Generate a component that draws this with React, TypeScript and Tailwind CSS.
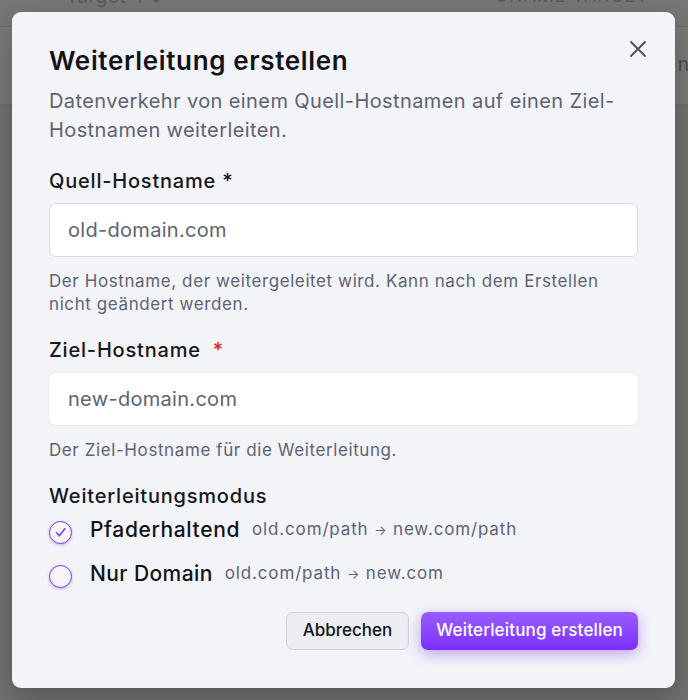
import React from 'react';

function CloseIcon() {
  return (
    <svg width="18" height="18" viewBox="0 0 18 18" fill="none" stroke="#4b5060" strokeWidth="1.8" strokeLinecap="round">
      <path d="M2 2l14 14M16 2L2 16" />
    </svg>
  );
}

function Radio({ checked }: { checked?: boolean }) {
  return (
    <span className="flex h-[23px] w-[23px] shrink-0 items-center justify-center rounded-full border-[1.5px] border-[#7c3aed] bg-[#f6f5fb] shadow-[0_1px_3px_rgba(124,58,237,0.35)]">
      {checked && (
        <svg width="13" height="13" viewBox="0 0 13 13" fill="none" stroke="#7c3aed" strokeWidth="1.6" strokeLinecap="round" strokeLinejoin="round">
          <path d="M2.5 6.8l2.8 3L10.8 2.8" />
        </svg>
      )}
    </span>
  );
}

export default function App() {
  return (
    <div className="relative h-[700px] w-[688px] overflow-hidden bg-[#717171] font-['Inter',sans-serif]">
      {/* page behind the overlay */}
      <div className="flex h-[27px] items-start border-b border-[#6c6c6c] bg-[#777777] text-[19px] leading-none text-[#5a5a5a]">
        <span className="ml-[66px] -mt-[13px] tracking-wide">Target ↑↓</span>
        <span className="ml-auto mr-[39px] -mt-[13px] text-[18px] tracking-[0.06em]">CNAME TARGET</span>
      </div>
      <div className="flex h-[78px] items-center justify-end border-b border-[#6c6c6c] bg-[#7a7a7a] text-[19px] text-[#4a4a4a]">
        <span className="-mr-[12px]">ne</span>
      </div>

      {/* dialog */}
      <div className="absolute left-[12px] top-[12px] flex h-[676px] w-[663px] flex-col rounded-[9px] bg-[#f3f4f8] px-[37px] pt-[33px] shadow-[0_10px_30px_rgba(0,0,0,0.25)]">
        <button type="button" className="absolute right-[27px] top-[27px] p-[1px]">
          <CloseIcon />
        </button>

        <h2 className="text-[26px] font-semibold leading-[32px] tracking-[0.025em] text-[#111318]">Weiterleitung erstellen</h2>
        <p className="mt-[10px] text-[20px] leading-[29px] tracking-[0.02em] text-[#5d6373]">
          Datenverkehr von einem Quell-Hostnamen auf einen Ziel-Hostnamen weiterleiten.
        </p>

        <label className="mt-[22px] text-[20px] font-medium leading-[28px] tracking-[0.04em] text-[#15171c]">Quell-Hostname *</label>
        <div className="mt-[8px] flex h-[54px] items-center rounded-[7px] border border-[#d6d8de] bg-white px-[18px] text-[20px] tracking-[0.015em] text-[#5d6373]">
          old-domain.com
        </div>
        <p className="mt-[13px] text-[17px] leading-[23px] tracking-[0.035em] text-[#5d6373]">
          Der Hostname, der weitergeleitet wird. Kann nach dem Erstellen nicht geändert werden.
        </p>

        <label className="mt-[20px] flex items-center text-[20px] font-medium leading-[28px] tracking-[0.04em] text-[#15171c]">
          Ziel-Hostname
          <span className="ml-[12px] text-[#e02424]">*</span>
        </label>
        <div className="mt-[9px] flex h-[52px] items-center rounded-[7px] bg-white px-[19px] text-[20px] tracking-[0.015em] text-[#5d6373] shadow-[0_0_2px_rgba(0,0,0,0.12)]">
          new-domain.com
        </div>
        <p className="mt-[14px] text-[17px] leading-[23px] tracking-[0.035em] text-[#5d6373]">Der Ziel-Hostname für die Weiterleitung.</p>

        <p className="mt-[20px] text-[20px] font-medium leading-[28px] tracking-[0.04em] text-[#15171c]">Weiterleitungsmodus</p>

        <div className="mt-[6px] flex flex-col gap-[16px]">
          <div className="flex h-[28px] items-center">
            <span className="mt-[5px]">
              <Radio checked />
            </span>
            <span className="ml-[18px] text-[21px] font-medium tracking-[0.03em] text-[#111318]">Pfaderhaltend</span>
            <span className="ml-[12px] text-[17px] tracking-[0.05em] text-[#5d6373]">
              old.com/path <span className="text-[13px]">→</span> new.com/path
            </span>
          </div>
          <div className="flex h-[28px] items-center">
            <span className="mt-[5px]">
              <Radio />
            </span>
            <span className="ml-[18px] text-[21px] font-medium tracking-[0.02em] text-[#111318]">Nur Domain</span>
            <span className="ml-[12px] text-[17px] tracking-[0.05em] text-[#5d6373]">
              old.com/path <span className="text-[13px]">→</span> new.com
            </span>
          </div>
        </div>

        <div className="mt-[24px] flex justify-end gap-[12px]">
          <button type="button" className="h-[38px] rounded-[7px] border border-[#cfd2d9] bg-[#eceef3] px-[16px] text-[17px] font-medium text-[#111318]">
            Abbrechen
          </button>
          <button type="button" className="h-[38px] rounded-[7px] bg-gradient-to-b from-[#9a5cff] to-[#7a2cff] px-[15px] text-[17px] font-medium tracking-[0.01em] text-white shadow-[0_4px_14px_rgba(124,58,237,0.45)]">
            Weiterleitung erstellen
          </button>
        </div>
      </div>
    </div>
  );
}
